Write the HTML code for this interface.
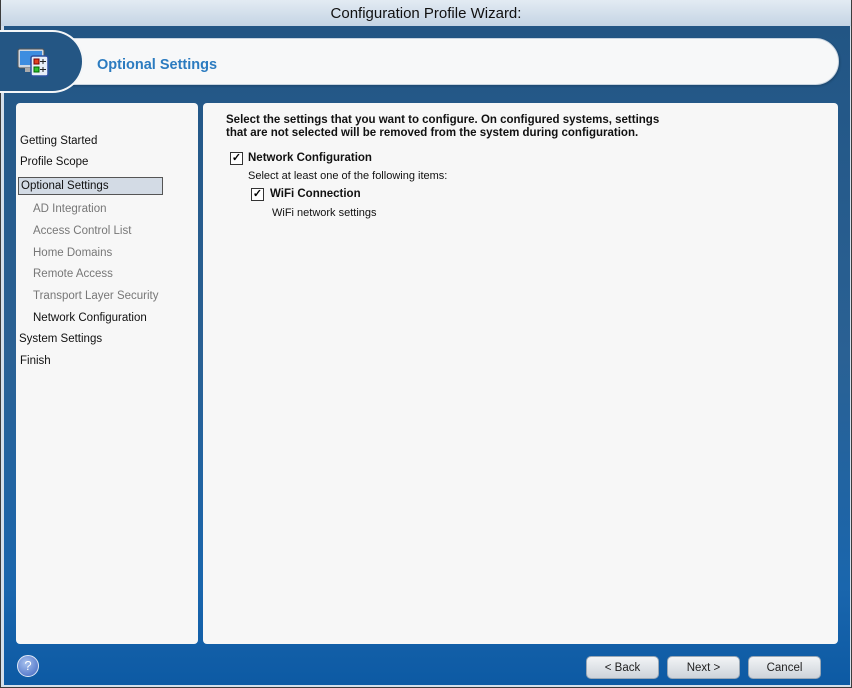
<!DOCTYPE html>
<html><head><style>
*{margin:0;padding:0;box-sizing:border-box}
body{width:852px;height:688px;background:#3c3c3c;font-family:"Liberation Sans",Tahoma,sans-serif;position:relative;overflow:hidden}
.win{position:absolute;left:1px;top:0;width:850px;height:687px;background:#d4dfea;border-radius:5px 5px 0 0}
.title{position:absolute;left:0;top:0;width:850px;height:26px;background:linear-gradient(#e3ebf3,#c4d4e4);text-align:center;font-size:15px;line-height:28px;color:#111}
.body{position:absolute;left:3px;top:26px;width:846px;height:659px;background:linear-gradient(#225584 0%,#2a6194 50%,#1a66ad 85%,#0d5aa4 100%)}
.hdr{position:absolute;left:60px;top:12px;width:775px;height:47px;background:#f7f8f9;border-radius:0 24px 24px 0;border:1px solid #c8d4e0;box-shadow:1px 1px 2px #0003}
.circ{position:absolute;left:-20px;top:4px;width:100px;height:63px;background:#245684;border:2px solid #f4f6f8;border-left:none;border-radius:0 32px 32px 0}
.hdr span{position:absolute;left:32px;top:18px;font-size:14.5px;font-weight:bold;color:#2b7bc0}
.lp{position:absolute;left:12px;top:77px;width:182px;height:541px;background:#f7f7f7;border-radius:4px}
.rp{position:absolute;left:199px;top:77px;width:635px;height:541px;background:#f7f7f7;border-radius:4px}
.it{position:absolute;font-size:11.5px;color:#111;white-space:nowrap}
.sub{color:#777}
.sel{position:absolute;left:2px;top:74px;width:145px;height:18px;background:#d3dbe5;border:1px solid #555}
.cb{position:absolute;width:13px;height:13px;border:1px solid #333;background:#fff;font-size:11px;line-height:11px;text-align:center;font-weight:bold}
.btn{position:absolute;top:630px;width:73px;height:23px;border-radius:5px;background:linear-gradient(#f2f4f6,#cdd3da);border:1px solid #9aa8b6;font-size:11.5px;text-align:center;line-height:23px;color:#222}
.help{position:absolute;left:13px;top:629px;width:22px;height:22px;border-radius:50%;background:radial-gradient(circle at 40% 35%,#a7c1ee,#3d64c0);border:1.5px solid #dfe8f6;color:#fff;font-size:13px;text-align:center;line-height:19px}
</style></head><body>
<div class="win">
<div class="title">Configuration Profile Wizard:</div>
<div class="body">
<div class="hdr"><span>Optional Settings</span></div>
<div class="circ"></div>
<svg style="position:absolute;left:13px;top:22px" width="34" height="30" viewBox="0 0 34 30">
<rect x="1" y="1" width="26" height="19" rx="2" fill="#cfd8e2" stroke="#555"/>
<rect x="3" y="3" width="22" height="14" fill="#3d8de0"/>
<rect x="8" y="20" width="12" height="4" fill="#aaa"/>
<rect x="14" y="8" width="17" height="20" rx="2" fill="#e8eef8" stroke="#2c50a0" stroke-width="1.5"/>
<rect x="17" y="11" width="5" height="5" fill="#e04020" stroke="#700"/>
<rect x="17" y="19" width="5" height="5" fill="#30c030" stroke="#060"/>
<path d="M23 13.5h6M26 11v5M23 21.5h6M26 19v5" stroke="#222"/>
</svg>
<div class="lp">
<div class="it" style="left:4px;top:32px">Getting Started</div>
<div class="it" style="left:4px;top:53px">Profile Scope</div>
<div class="sel"></div>
<div class="it" style="left:5px;top:77px">Optional Settings</div>
<div class="it sub" style="left:17px;top:100px">AD Integration</div>
<div class="it sub" style="left:17px;top:122px">Access Control List</div>
<div class="it sub" style="left:17px;top:144px">Home Domains</div>
<div class="it sub" style="left:17px;top:165px">Remote Access</div>
<div class="it sub" style="left:17px;top:187px">Transport Layer Security</div>
<div class="it" style="left:17px;top:209px">Network Configuration</div>
<div class="it" style="left:3px;top:230px">System Settings</div>
<div class="it" style="left:4px;top:252px">Finish</div>
</div>
<div class="rp">
<div class="it" style="left:23px;top:11px;font-weight:bold;line-height:13px">Select the settings that you want to configure. On configured systems, settings<br>that are not selected will be removed from the system during configuration.</div>
<div class="cb" style="left:27px;top:49px">✓</div>
<div class="it" style="left:45px;top:49px;font-weight:bold">Network Configuration</div>
<div class="it" style="left:45px;top:67px;font-size:11px">Select at least one of the following items:</div>
<div class="cb" style="left:48px;top:85px">✓</div>
<div class="it" style="left:67px;top:85px;font-weight:bold">WiFi Connection</div>
<div class="it" style="left:69px;top:104px;font-size:11px">WiFi network settings</div>
</div>
<div class="help">?</div>
<div class="btn" style="left:582px">&lt; Back</div>
<div class="btn" style="left:663px">Next &gt;</div>
<div class="btn" style="left:744px">Cancel</div>
</div>
</div>
</body></html>
